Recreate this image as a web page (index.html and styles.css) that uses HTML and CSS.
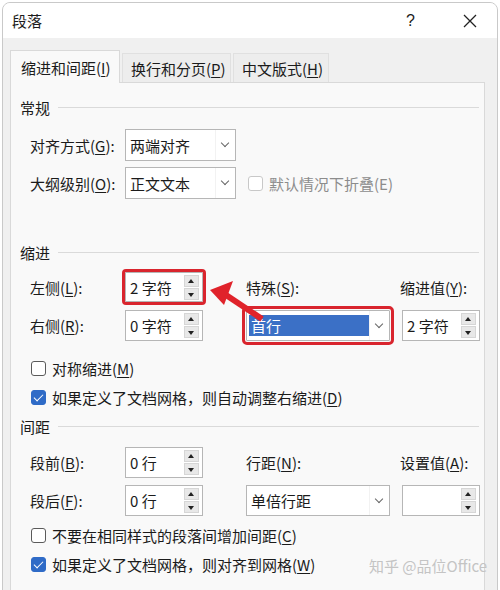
FILE: index.html
```html
<!DOCTYPE html>
<html lang="zh-CN">
<head>
    <meta charset="UTF-8">
    <title>段落</title>
    <link rel="stylesheet" href="styles.css">
</head>
<body>
    <div class="dialog">
        <div class="titlebar">
            <span class="title">段落</span>
            <span class="help">?</span>
            <span class="close">
                <svg width="14" height="14" viewBox="0 0 14 14"><path d="M1 1L13 13M13 1L1 13" stroke="#222" stroke-width="1.3" fill="none"/></svg>
            </span>
        </div>
        <div class="body">
            <div class="tabs">
                <div class="tab active">缩进和间距(<u>I</u>)</div>
                <div class="tab">换行和分页(<u>P</u>)</div>
                <div class="tab">中文版式(<u>H</u>)</div>
            </div>
            <div class="panel">
                <div class="group-title first"><span>常规</span><i></i></div>

                <div class="row row-sel">
                    <span class="lbl">对齐方式(<u>G</u>):</span>
                    <div class="select narrow"><span class="val">两端对齐</span><span class="drop"></span></div>
                </div>
                <div class="row row-sel2">
                    <span class="lbl">大纲级别(<u>O</u>):</span>
                    <div class="select narrow"><span class="val">正文文本</span><span class="drop"></span></div>
                    <span class="check disabled"></span>
                    <span class="check-text disabled">默认情况下折叠(E)</span>
                </div>

                <div class="group-title indent"><span>缩进</span><i></i></div>

                <div class="row row-left">
                    <span class="lbl">左侧(<u>L</u>):</span>
                    <div class="spin marked"><span class="val">2 字符</span><span class="btns"><b class="up"></b><b class="down"></b></span></div>
                    <span class="lbl col2">特殊(<u>S</u>):</span>
                    <span class="lbl col3">缩进值(<u>Y</u>):</span>
                </div>
                <div class="row row-right">
                    <span class="lbl">右侧(<u>R</u>):</span>
                    <div class="spin"><span class="val">0 字符</span><span class="btns"><b class="up"></b><b class="down"></b></span></div>
                    <div class="select wide marked"><span class="val"><em class="picked">首行</em></span><span class="drop"></span></div>
                    <div class="spin col3"><span class="val">2 字符</span><span class="btns"><b class="up"></b><b class="down"></b></span></div>
                </div>

                <div class="check-row cr1"><span class="check"></span><span class="check-text">对称缩进(<u>M</u>)</span></div>
                <div class="check-row cr2"><span class="check on"></span><span class="check-text">如果定义了文档网格，则自动调整右缩进(<u>D</u>)</span></div>

                <div class="group-title spacing"><span>间距</span><i></i></div>

                <div class="row row-before">
                    <span class="lbl">段前(<u>B</u>):</span>
                    <div class="spin"><span class="val">0 行</span><span class="btns"><b class="up"></b><b class="down"></b></span></div>
                    <span class="lbl col2">行距(<u>N</u>):</span>
                    <span class="lbl col3">设置值(<u>A</u>):</span>
                </div>
                <div class="row row-after">
                    <span class="lbl">段后(<u>F</u>):</span>
                    <div class="spin"><span class="val">0 行</span><span class="btns"><b class="up"></b><b class="down"></b></span></div>
                    <div class="select wide"><span class="val">单倍行距</span><span class="drop"></span></div>
                    <div class="spin col3"><span class="val"></span><span class="btns"><b class="up"></b><b class="down"></b></span></div>
                </div>

                <div class="check-row cr3"><span class="check"></span><span class="check-text">不要在相同样式的段落间增加间距(<u>C</u>)</span></div>
                <div class="check-row cr4"><span class="check on"></span><span class="check-text">如果定义了文档网格，则对齐到网格(<u>W</u>)</span></div>
            </div>
        </div>
    </div>

    <svg class="arrow" width="500" height="590" viewBox="0 0 500 590">
        <path d="M226 295L262 319" stroke="#e0232b" stroke-width="6" fill="none"/>
        <path d="M210 290L233 281L224 305Z" fill="#e0232b"/>
    </svg>
    <div class="watermark">知乎 @品位Office</div>
</body>
</html>
```

FILE: styles.css
```css
body {
    margin: 0;
    background: #ffffff;
    font-family: "Noto Sans CJK SC", "Noto Sans", sans-serif;
    font-size: 15px;
    color: #1b1b1b;
    overflow: hidden;
}
u {
    text-decoration: underline;
    text-underline-offset: 2px;
}
.dialog {
    width: 494px;
    height: 600px;
    margin: 2px 0 0 2px;
    border: 1px solid #c9c9c9;
    border-radius: 8px 8px 0 0;
    overflow: hidden;
    background: #f0f0f0;
}
.titlebar {
    display: flex;
    align-items: center;
    height: 35px;
    background: #ffffff;
}
.title {
    margin-left: 9px;
    font-size: 15px;
}
.help {
    margin-left: auto;
    font-size: 16px;
    font-family: "Liberation Sans", sans-serif;
}
.close {
    display: flex;
    margin: 0 20px 0 48px;
}
.body {
    padding: 12px 0 0 7px;
}
.tabs {
    display: flex;
    align-items: flex-end;
    height: 32px;
    position: relative;
    z-index: 1;
}
.tab {
    height: 29px;
    line-height: 29px;
    padding: 0 0 0 8px;
    margin-right: 2px;
    background: #ededed;
    border: 1px solid #e0e0e0;
    border-bottom: none;
    box-sizing: border-box;
    width: 109px;
    white-space: nowrap;
    overflow: hidden;
}
.tab:nth-child(3) {
    width: 96px;
}
.tab.active {
    height: 33px;
    line-height: 34px;
    width: 110px;
    padding-left: 10px;
    margin-bottom: -1px;
    background: #f9f9f9;
    border-color: #d9d9d9;
}
.panel {
    width: 475px;
    height: 520px;
    background: #f9f9f9;
    border: 1px solid #d9d9d9;
    box-sizing: border-box;
}
.group-title {
    display: flex;
    align-items: center;
    height: 20px;
    padding: 0 5px 0 9px;
}
.group-title i {
    flex: 1;
    height: 1px;
    background: #dadada;
    margin-left: 8px;
}
.group-title.first { margin-top: 14px; }
.group-title.indent { margin-top: 43px; }
.group-title.spacing { margin-top: 8px; }

.row {
    display: flex;
    align-items: center;
    padding-left: 19px;
}
.lbl {
    width: 95px;
    flex: none;
}
.lbl.col2 {
    width: 154px;
    margin-left: 43px;
}
.lbl.col3 {
    width: auto;
}
.row-sel { margin-top: 12px; height: 32px; }
.row-sel2 { margin-top: 6px; height: 32px; }
.row-left { margin-top: 10px; height: 30px; }
.row-right { margin-top: 8px; height: 31px; }
.row-before { margin-top: 11px; height: 31px; }
.row-after { margin-top: 7px; height: 31px; }

.select, .spin {
    display: flex;
    align-items: center;
    height: 100%;
    background: #ffffff;
    border: 1px solid #b6b6b6;
    box-sizing: border-box;
    flex: none;
}
.select .val, .spin .val {
    flex: 1;
    padding-left: 4px;
    white-space: nowrap;
}
.select.narrow { width: 111px; }
.select.wide {
    width: 144px;
    margin-left: 43px;
}
.drop {
    width: 19px;
    height: 100%;
    border-left: 1px solid #f2f2f2;
    position: relative;
}
.drop::after {
    content: "";
    position: absolute;
    left: 6px;
    top: 50%;
    width: 5px;
    height: 5px;
    margin-top: -5px;
    border-right: 1px solid #666;
    border-bottom: 1px solid #666;
    transform: rotate(45deg);
}
.spin { width: 78px; }
.spin.col3 { margin-left: 12px; }
.btns {
    display: flex;
    flex-direction: column;
    gap: 1px;
    width: 15px;
    margin-right: 3px;
}
.btns b {
    height: 12px;
    background: #e8e8e8;
    border: 1px solid #d6d6d6;
    box-sizing: border-box;
    position: relative;
}
.btns b::after {
    content: "";
    position: absolute;
    left: 3px;
    border-left: 3.5px solid transparent;
    border-right: 3.5px solid transparent;
}
.btns .up::after {
    top: 3px;
    border-bottom: 4px solid #222;
}
.btns .down::after {
    top: 4px;
    border-top: 4px solid #222;
}
.marked {
    outline: 3px solid #d9252e;
    outline-offset: 0;
    border-radius: 1px;
}
.select.marked {
    outline-offset: 1px;
}
.picked {
    font-style: normal;
    display: block;
    margin-left: -2px;
    padding-left: 2px;
    height: 21px;
    line-height: 21px;
    background: #3b70c6;
    color: #ffffff;
}

.check-row {
    display: flex;
    align-items: center;
    height: 22px;
    padding-left: 20px;
}
.cr1 { margin-top: 16px; }
.cr2 { margin-top: 7px; }
.cr3 { margin-top: 8px; }
.cr4 { margin-top: 7px; }
.check {
    width: 15px;
    height: 15px;
    border: 1px solid #5b5b5b;
    border-radius: 3px;
    box-sizing: border-box;
    background: #ffffff;
    flex: none;
    position: relative;
}
.check.on {
    background: #2f6bc7;
    border-color: #2f6bc7;
}
.check.on::after {
    content: "";
    position: absolute;
    left: 4px;
    top: 1px;
    width: 4px;
    height: 8px;
    border-right: 1.5px solid #ffffff;
    border-bottom: 1.5px solid #ffffff;
    transform: rotate(45deg);
}
.check.disabled {
    border-color: #c8c8c8;
    margin-left: 12px;
}
.check-text {
    margin-left: 6px;
    white-space: nowrap;
}
.check-text.disabled {
    color: #8c8c8c;
}
.arrow {
    position: absolute;
    left: 0;
    top: 0;
    pointer-events: none;
}
.watermark {
    position: absolute;
    left: 369px;
    top: 555px;
    color: #c4c4c4;
    font-size: 15px;
}
```
